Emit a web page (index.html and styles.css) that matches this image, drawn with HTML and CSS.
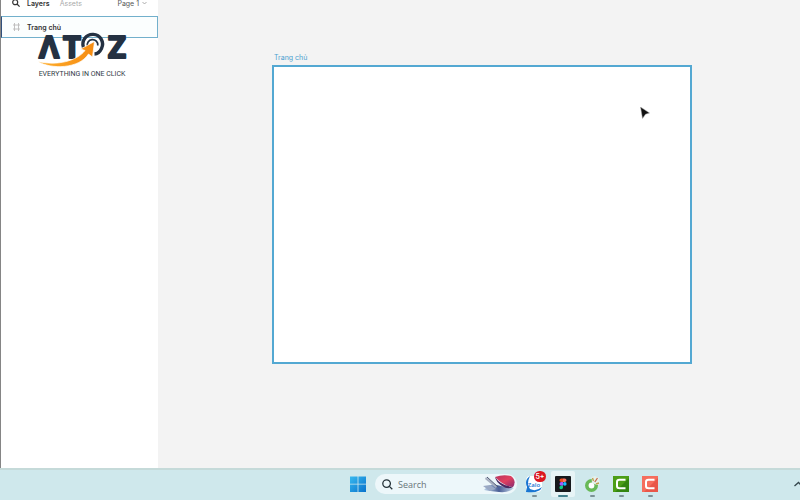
FILE: index.html
```html
<!DOCTYPE html>
<html lang="vi">
<head>
<meta charset="utf-8">
<title>Trang chủ</title>
<link rel="stylesheet" href="styles.css">
</head>
<body>
<div class="workspace">
  <aside class="panel">
    <nav class="tabs">
      <button class="icon-button" aria-label="Find">
        <svg width="8" height="8" viewBox="0 0 8 8" fill="none" stroke="#333" stroke-width="1.2"><circle cx="3.2" cy="3.2" r="2.5"/><path d="M5 5l2.6 2.6"/></svg>
      </button>
      <button class="tab tab-active">Layers</button>
      <button class="tab">Assets</button>
      <button class="page-picker">Page 1
        <svg width="5" height="4" viewBox="0 0 5 4" fill="none" stroke="#999" stroke-width=".8"><path d="M.5 1l2 2 2-2"/></svg>
      </button>
    </nav>
    <button class="layer">
      <svg width="7" height="8" viewBox="0 0 7 8" fill="none" stroke="#bbb" stroke-width=".9"><path d="M1.500 0v8M5.500 0v8M0 2h7M0 6h7"/></svg>
      <span>Trang chủ</span>
    </button>
    <div class="brand">
      <svg class="brand-mark" width="90" height="40" viewBox="0 0 90 40">
        <defs>
          <linearGradient id="swoosh" x1="0" x2="1"><stop offset="0" stop-color="#ffae2b"/><stop offset="1" stop-color="#f58b12"/></linearGradient>
        </defs>
        <g class="brand-letters">
          <text x="12" y="27">Λ</text>
          <text x="35" y="27">T</text>
          <text x="80" y="27">Z</text>
        </g>
        <g fill="none" stroke="#243142">
          <path d="M46.500 16.500A9.800 9.800 0 1 1 64.500 17.500Q62 22.800 57.500 23" stroke-width="3.400"/>
          <path d="M50.500 15.500A5.300 5.300 0 1 1 60.800 14.500" stroke-width="1.700"/>
        </g>
        <path d="M57.500 10.500L43.500 18l4.500 1.500C40 30 20 35 1 30.500 14 38.500 42 38 51.500 23L55.500 26z" fill="url(#swoosh)" stroke="#fff" stroke-width=".7"/>
      </svg>
      <p class="tagline">EVERYTHING IN ONE CLICK</p>
    </div>
  </aside>
  <main class="canvas">
    <section class="frame">
      <h1 class="frame-label">Trang chủ</h1>
      <div class="frame-body"></div>
    </section>
    <svg class="cursor" width="10" height="12" viewBox="0 0 10 12"><path d="M.5 0L9.500 6l-4 1.200-3 4.300z" fill="#111" stroke="#aaa" stroke-width=".5"/></svg>
  </main>
</div>
<footer class="taskbar">
  <button class="app" aria-label="Start">
    <svg width="16" height="16" viewBox="0 0 16 16"><defs><linearGradient id="win" x1="0" y1="0" x2="1" y2="1"><stop stop-color="#38b9ef"/><stop offset="1" stop-color="#0872cc"/></linearGradient></defs><path d="M0 .5h7.600v7.200H0zM8.400.5H16v7.200H8.400zM0 8.500h7.600V16H0zM8.400 8.500H16V16H8.400z" fill="url(#win)"/></svg>
  </button>
  <label class="search">
    <svg width="11" height="11" viewBox="0 0 11 11" fill="none" stroke="#243238" stroke-width="1.300"><circle cx="4.600" cy="4.600" r="3.800"/><path d="M7.400 7.400L10.300 10.300"/></svg>
    <input type="text" placeholder="Search" aria-label="Search">
    <svg width="33" height="18" viewBox="0 0 33 18">
      <defs>
        <linearGradient id="petal" x1="0" y1="0" x2="1" y2="1"><stop stop-color="#b8345f"/><stop offset=".5" stop-color="#e0405f"/><stop offset="1" stop-color="#8a2b70"/></linearGradient>
        <linearGradient id="wing" x1="0" x2="1"><stop stop-color="#b9d0e6"/><stop offset=".5" stop-color="#4b5f96"/><stop offset="1" stop-color="#c5d8ea"/></linearGradient>
      </defs>
      <path d="M1 15Q7 8 14 10T31 13Q26 18 16 17T1 15z" fill="url(#wing)"/>
      <path d="M0 11l7-1 6 4-6 2z" fill="#9aa9c4"/>
      <path d="M3 2l11 9-1 2L2 4z" fill="#a7afc0"/>
      <path d="M4 2l11 10" stroke="#4c5571" stroke-width="1"/>
      <path d="M12 2Q20-1 28 1 34 6 30 12 22 12 12 2z" fill="url(#petal)"/>
      <path d="M12 2q6 9 18 10-5 3-11-1T12 2z" fill="#4a2860"/>
    </svg>
  </label>
  <button class="app running" aria-label="Zalo">
    <svg width="18" height="18" viewBox="0 0 18 18"><path d="M5 1h8q4 0 4 5v6q0 5-5 5H4q-3 0-3-4V6q0-5 4-5z" fill="#fff"/><path d="M5 1Q-1 5 2 12q-1 4-1 5 9 1 12-1 3-1 4-4-6 5-12 2Q1 9 5 1z" fill="#1976d2"/><text x="9" y="12" class="zalo-text">Zalo</text></svg>
    <span class="badge">5+</span>
  </button>
  <button class="app running current" aria-label="Figma">
    <svg width="16" height="16" viewBox="0 0 16 16"><rect width="16" height="16" rx="1" fill="#17191c"/><path d="M8 2.500H6.300a1.800 1.800 0 0 0 0 3.600H8z" fill="#f24e1e"/><path d="M8 2.500h1.700a1.800 1.800 0 0 1 0 3.600H8z" fill="#ff7262"/><path d="M8 6.100H6.300a1.800 1.800 0 0 0 0 3.600H8z" fill="#a259ff"/><circle cx="9.800" cy="7.900" r="1.800" fill="#1abcfe"/><path d="M8 9.700H6.300A1.800 1.800 0 1 0 8 11.500z" fill="#0acf83"/></svg>
  </button>
  <button class="app running" aria-label="Cốc Cốc">
    <svg width="16" height="17" viewBox="0 0 16 17"><circle cx="7.500" cy="9.500" r="6.500" fill="#68b957"/><circle cx="7.500" cy="9.500" r="2.900" fill="#fff"/><path d="M8 7L7.500 1 11 0l4 2 1 6-3 1z" fill="#e4f1ec"/><path d="M9.500 5L8.500 2M12 8l3-1" fill="none" stroke="#c0a24b" stroke-width="1.400"/><path d="M10.800 6l2.700-4" stroke="#c8694a" stroke-width="1.300"/></svg>
  </button>
  <button class="app running" aria-label="Camtasia">
    <svg width="16" height="16" viewBox="0 0 16 16"><path d="M0 0h16v16H0z" fill="#4c9e17"/><path d="M16 2v14H2z" fill="#338510"/><path d="M12.500 3.700H6.500Q4 3.700 4 6v4q0 2.300 2.500 2.300h6" fill="none" stroke="#fff" stroke-width="2"/></svg>
  </button>
  <button class="app running" aria-label="Camtasia Recorder">
    <svg width="16" height="16" viewBox="0 0 16 16"><path d="M0 0h16v16H0z" fill="#f56e5e"/><path d="M16 2v14H2z" fill="#e95749"/><path d="M12.500 3.700H6.500Q4 3.700 4 6v4q0 2.300 2.500 2.300h6" fill="none" stroke="#fff" stroke-width="2"/></svg>
  </button>
  <button class="tray" aria-label="Show hidden icons">
    <svg width="6" height="6" viewBox="0 0 6 6" fill="none" stroke="#34464c" stroke-width="1.300"><path d="M.5 5l4-3.500L8 5"/></svg>
  </button>
</footer>
</body>
</html>
```
FILE: styles.css
```css
* { box-sizing: border-box; }
body {
  margin: 0;
  height: 100vh;
  display: flex;
  flex-direction: column;
  overflow: hidden;
  font-family: Inter, "Liberation Sans", sans-serif;
  color: #333;
}
button {
  margin: 0;
  padding: 0;
  border: 0;
  background: none;
  font: inherit;
  color: inherit;
}
svg { display: block; flex: none; }
.workspace { flex: 1; display: flex; min-height: 0; }
.panel {
  position: relative;
  width: 158px;
  flex: none;
  border-left: 1px solid #858585;
  background: #fff;
}
.tabs {
  display: flex;
  align-items: center;
  height: 16px;
  margin-top: -5px;
  padding: 0 11px;
  font-size: 7px;
  color: #aaa;
}
.icon-button { margin-right: 7px; }
.tab-active { margin-right: 10px; color: #333; font-weight: 600; }
.page-picker {
  display: flex;
  align-items: center;
  gap: 3px;
  margin-left: auto;
  color: #555;
}
.layer {
  display: flex;
  align-items: center;
  gap: 7px;
  width: 100%;
  height: 22px;
  margin-top: 5px;
  padding-left: 11px;
  border: 1px solid #72b0cc;
  border-left-color: #31507c;
  background: #fbfefe;
  font-size: 7px;
  font-weight: 600;
}
.brand { position: absolute; left: 36px; top: 31px; }
.brand-mark { overflow: visible; }
.brand-letters {
  font: 700 31px "Open Sans", sans-serif;
  text-anchor: middle;
  fill: #243142;
  stroke: #243142;
  stroke-width: 2px;
  stroke-linejoin: round;
}
.tagline {
  margin: 0;
  font: 400 7px/6px Roboto, sans-serif;
  white-space: nowrap;
  color: #303a46;
  text-align: center;
}
.canvas { position: relative; flex: 1; background: #f3f3f3; }
.frame { position: absolute; left: 114px; top: 52px; width: 420px; }
.frame-label {
  margin: 0;
  padding: 0 2px 2px;
  font-size: 7px;
  line-height: 11px;
  font-weight: 400;
  color: #4a9fd0;
}
.frame-body { height: 299px; border: 2px solid #53a8d2; background: #fff; }
.cursor { position: absolute; left: 482px; top: 107px; }
.taskbar {
  display: flex;
  align-items: center;
  gap: 9px;
  flex: none;
  padding: 1px 0 3px calc(50% - 50px);
  border-top: 2px solid #c5dad9;
  background: #cfe8ec;
}
.search {
  display: flex;
  align-items: center;
  width: 142px;
  height: 20px;
  padding: 0 1px 0 7px;
  gap: 5px;
  border-radius: 10px;
  background: #edf7fa;
}
.search input {
  flex: 1;
  min-width: 0;
  padding: 0;
  border: 0;
  outline: 0;
  background: none;
  font: 9px "Open Sans", sans-serif;
}
.search input::placeholder { color: #687579; opacity: 1; }
.app {
  position: relative;
  display: flex;
  align-items: center;
  justify-content: center;
  height: 26px;
}
.running { width: 24px; margin-left: -4px; }
.running::after {
  content: "";
  position: absolute;
  bottom: 0;
  width: 5px;
  height: 2px;
  border-radius: 1px;
  background: #7c9197;
}
.current { border-radius: 2px; background: #e7f4f6; }
.current::after { width: 10px; background: #42808d; }
.zalo-text {
  font: 600 6px "Open Sans", sans-serif;
  text-anchor: middle;
  fill: #1976d2;
}
.badge {
  position: absolute;
  right: 0;
  top: 0;
  width: 12px;
  height: 11px;
  border-radius: 6px;
  background: #db1820;
  color: #fff;
  font-size: 7px;
  line-height: 11px;
  font-weight: 600;
}
.tray { margin-left: auto; }
```
